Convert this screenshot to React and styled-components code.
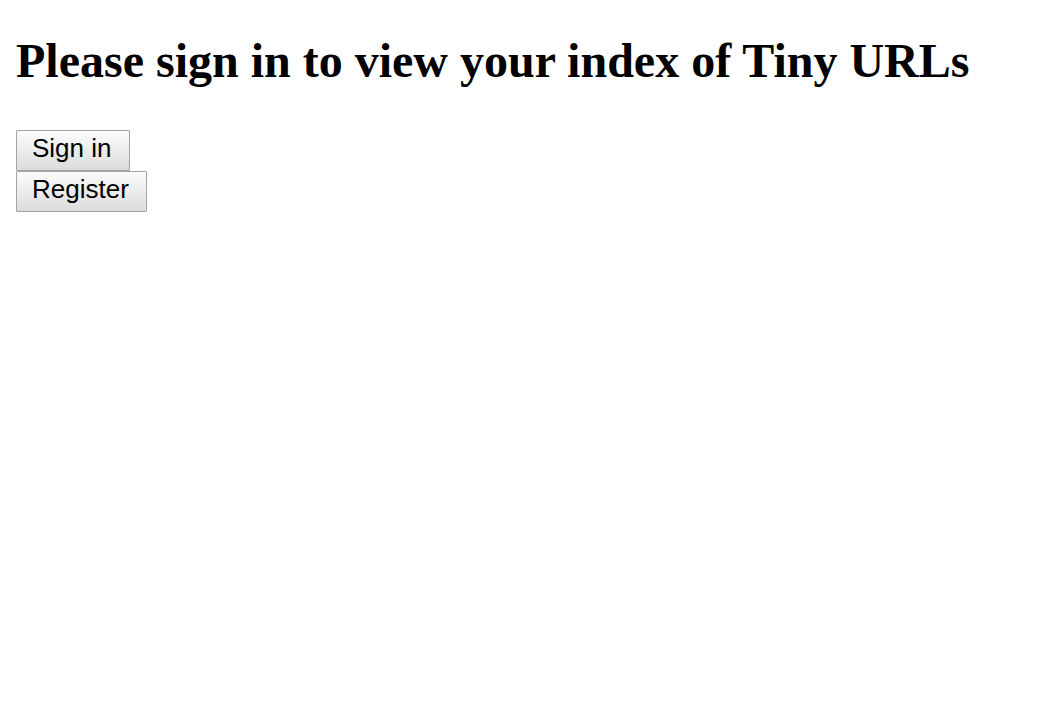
import React from 'react'
import styled, { createGlobalStyle } from 'styled-components'

const GlobalStyle = createGlobalStyle`
  body {
    margin: 0;
    padding: 16px;
    background: #fff;
    font-family: "Liberation Serif", serif;
  }
`

const Title = styled.h1`
  font-family: "Liberation Serif", serif;
  font-size: 48px;
  font-weight: bold;
  margin: 0 0 42px 0;
  padding-top: 17px;
  line-height: 1.15;
`

const Actions = styled.div`
  display: flex;
  flex-direction: column;
  align-items: flex-start;
`

const Button = styled.button`
  font-family: "Liberation Sans", Arial, sans-serif;
  font-size: 26px;
  color: #000;
  padding: 2px 17px 6px 15px;
  border: 1px solid #a3a3a3;
  border-radius: 1px;
  background: linear-gradient(#fcfcfc, #dcdcdc);
  cursor: pointer;
`

const App = () => {
  return (
    <>
      <GlobalStyle />
      <Title>Please sign in to view your index of Tiny URLs</Title>
      <Actions>
        <Button>Sign in</Button>
        <Button>Register</Button>
      </Actions>
    </>
  )
}

export default App
